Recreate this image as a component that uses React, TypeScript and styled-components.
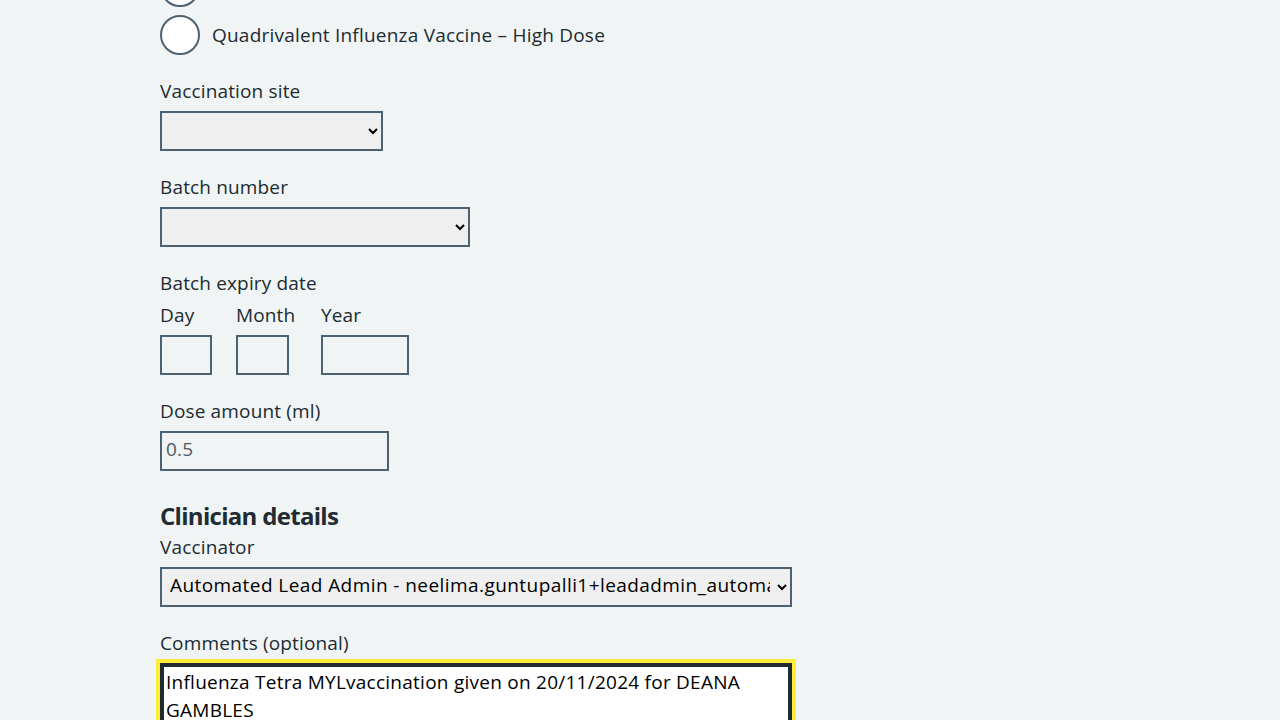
import styled, { createGlobalStyle } from "styled-components";

const GlobalStyle = createGlobalStyle`
  html, body {
    margin: 0;
    padding: 0;
    background: #f0f4f5;
  }
  body {
    font-family: "Open Sans", "Noto Sans", "Liberation Sans", sans-serif;
    color: #212b32;
    letter-spacing: 0.15px;
    overflow: hidden;
  }
`;

const Page = styled.main`
  max-width: 960px;
  margin: -33px auto 0;
`;

const RadioList = styled.div`
  margin-bottom: 21px;
`;

const RadioItem = styled.label`
  display: flex;
  align-items: center;
  min-height: 40px;
  margin-bottom: 8px;
  font-size: 19px;
  line-height: 28px;
  letter-spacing: 0.22px;

  &:last-child {
    margin-bottom: 0;
  }
`;

const RadioInput = styled.input.attrs({ type: "radio" })`
  appearance: none;
  box-sizing: border-box;
  width: 40px;
  height: 40px;
  margin: 0 12px 0 0;
  border: 2px solid #4c6272;
  border-radius: 50%;
  background: #ffffff;
  flex-shrink: 0;
`;

const FormGroup = styled.div<{ $mb?: number }>`
  margin-bottom: ${(p) => (p.$mb ?? 21)}px;
`;

const Label = styled.label`
  display: block;
  padding-top: 1px;
  font-size: 19px;
  line-height: 28px;
  margin-bottom: 6px;
`;

const Legend = styled.legend`
  padding: 1px 0 0;
  font-size: 19px;
  line-height: 28px;
  margin-bottom: 3px;
`;

const Fieldset = styled.fieldset`
  border: 0;
  margin: 0;
  padding: 0;
  min-width: 0;
`;

const Select = styled.select<{ $width: number }>`
  box-sizing: border-box;
  width: ${(p) => p.$width}px;
  height: 40px;
  padding: 0 4px 4px 4px;
  border: 2px solid #4c6272;
  border-radius: 0;
  background-color: #efefef;
  color: #000000;
  font-family: inherit;
  font-size: 19px;
  letter-spacing: 0.43px;
`;

const DateRow = styled.div`
  display: flex;
  gap: 24px;
`;

const DateItem = styled.div<{ $minWidth?: number }>`
  min-width: ${(p) => p.$minWidth ?? 0}px;
`;

const TextInput = styled.input<{ $width: number }>`
  display: block;
  box-sizing: border-box;
  width: ${(p) => p.$width}px;
  height: 40px;
  margin: 0;
  padding: 2px 4px 6px;
  border: 2px solid #4c6272;
  border-radius: 0;
  background: transparent;
  color: #212b32;
  font-family: inherit;
  font-size: 19px;
  letter-spacing: inherit;

  &::placeholder {
    color: #4f5a62;
    opacity: 1;
  }
`;

const Heading = styled.h2`
  margin: 29px 0 0;
  font-size: 24px;
  line-height: 32px;
  font-weight: 700;
  letter-spacing: -0.7px;
`;

const TextArea = styled.textarea`
  display: block;
  box-sizing: border-box;
  width: 632px;
  height: 150px;
  margin-top: 1px;
  padding: 3px 4px 4px;
  border: 2px solid #212b32;
  border-radius: 0;
  outline: 4px solid #ffeb3b;
  box-shadow: inset 0 0 0 2px #212b32;
  background: #ffffff;
  color: #000000;
  font-family: inherit;
  font-size: 19px;
  line-height: 28px;
  letter-spacing: 0.25px;
  resize: none;
`;

export default function App() {
  return (
    <>
      <GlobalStyle />
      <Page>
        <RadioList>
          <RadioItem>
            <RadioInput name="vaccine" />
            Quadrivalent Influenza Vaccine
          </RadioItem>
          <RadioItem>
            <RadioInput name="vaccine" />
            Quadrivalent Influenza Vaccine – High Dose
          </RadioItem>
        </RadioList>

        <FormGroup>
          <Label htmlFor="site">Vaccination site</Label>
          <Select id="site" $width={223} defaultValue="">
            <option value=""></option>
          </Select>
        </FormGroup>

        <FormGroup>
          <Label htmlFor="batch">Batch number</Label>
          <Select id="batch" $width={310} defaultValue="">
            <option value=""></option>
          </Select>
        </FormGroup>

        <FormGroup>
          <Fieldset>
            <Legend>Batch expiry date</Legend>
            <DateRow>
              <DateItem>
                <Label htmlFor="day">Day</Label>
                <TextInput id="day" $width={52} />
              </DateItem>
              <DateItem $minWidth={61}>
                <Label htmlFor="month">Month</Label>
                <TextInput id="month" $width={53} />
              </DateItem>
              <DateItem>
                <Label htmlFor="year">Year</Label>
                <TextInput id="year" $width={88} />
              </DateItem>
            </DateRow>
          </Fieldset>
        </FormGroup>

        <FormGroup>
          <Label htmlFor="dose">Dose amount (ml)</Label>
          <TextInput id="dose" $width={229} placeholder="0.5" />
        </FormGroup>

        <Heading>Clinician details</Heading>
        <FormGroup>
          <Label htmlFor="vaccinator">Vaccinator</Label>
          <Select id="vaccinator" $width={632} defaultValue="lead">
            <option value="lead">
              Automated Lead Admin - neelima.guntupalli1+leadadmin_automation@nhs.net
            </option>
          </Select>
        </FormGroup>

        <FormGroup>
          <Label htmlFor="comments">Comments (optional)</Label>
          <TextArea
            id="comments"
            defaultValue="Influenza Tetra MYLvaccination given on 20/11/2024 for DEANA GAMBLES"
          />
        </FormGroup>
      </Page>
    </>
  );
}
